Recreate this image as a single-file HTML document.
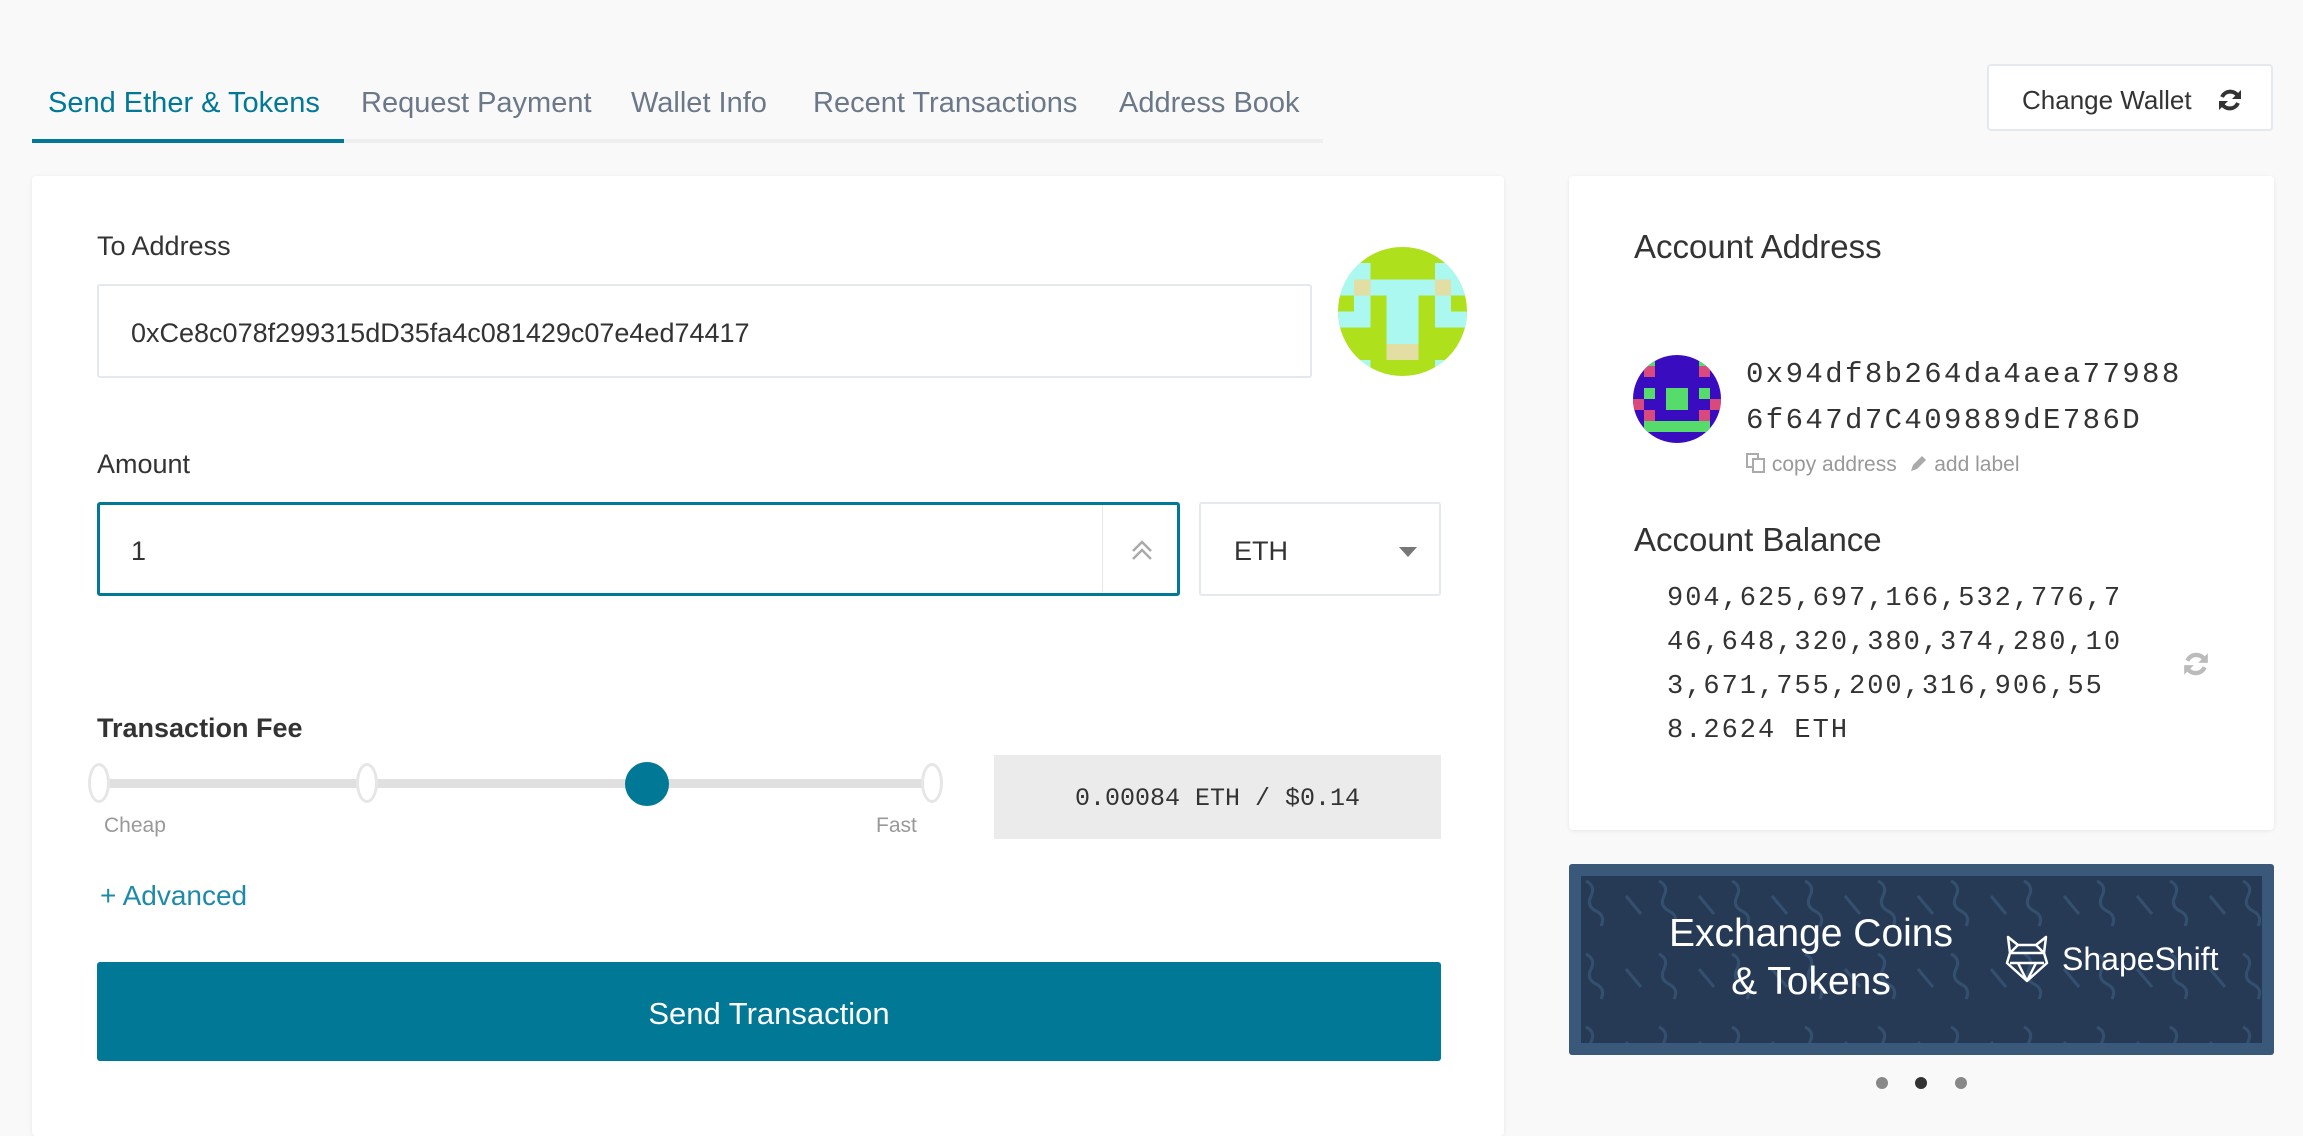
<!DOCTYPE html>
<html><head><meta charset="utf-8"><style>
*{box-sizing:border-box;margin:0;padding:0}
body{width:2303px;height:1113px;background:#f9f9f9;font-family:"Liberation Sans",sans-serif;position:relative;overflow:hidden;color:#333}
.abs{position:absolute}
.tab{position:absolute;top:87px;font-size:29px;color:#6b7888;white-space:nowrap}
.card{position:absolute;background:#fff;border-radius:4px;box-shadow:0 1px 4px rgba(0,0,0,.08)}
.lbl{position:absolute;font-size:27px;color:#333}
.mono{font-family:"Liberation Mono",monospace}
</style></head><body>
<div class="tab" style="left:48px;color:#007896">Send Ether &amp; Tokens</div>
<div class="tab" style="left:361px">Request Payment</div>
<div class="tab" style="left:631px">Wallet Info</div>
<div class="tab" style="left:813px">Recent Transactions</div>
<div class="tab" style="left:1119px">Address Book</div>
<div class="abs" style="left:32px;top:139px;width:1291px;height:4px;background:#efefef"></div>
<div class="abs" style="left:32px;top:139px;width:312px;height:4px;background:#007896"></div>

<div class="abs" style="left:1987px;top:64px;width:286px;height:67px;background:#fff;border:2px solid #e4e9f0;border-radius:4px;font-size:26px;color:#333;padding:19px 0 0 33px">Change Wallet
<svg style="position:absolute;left:228px;top:22px" width="26" height="24" viewBox="0 0 26 24"><path d="M21 8A9 9 0 0 0 5 9" fill="none" stroke="#333" stroke-width="4"/><path d="M24 2v9h-9z" fill="#333"/><path d="M5 16a9 9 0 0 0 16-1" fill="none" stroke="#333" stroke-width="4"/><path d="M2 22v-9h9z" fill="#333"/></svg></div>

<div class="card" style="left:32px;top:176px;width:1472px;height:960px"></div>
<div class="lbl" style="left:97px;top:231px">To Address</div>
<div class="abs" style="left:97px;top:284px;width:1215px;height:94px;border:2px solid #e4e9f0;border-radius:3px;font-size:27px;padding:32px 0 0 32px;color:#333">0xCe8c078f299315dD35fa4c081429c07e4ed74417</div>
<svg class="abs" style="left:1338px;top:247px" width="129" height="129" viewBox="0 0 8 8"><defs><clipPath id="c1"><circle cx="4" cy="4" r="4"/></clipPath></defs><g clip-path="url(#c1)" shape-rendering="crispEdges">
<rect width="8" height="8" fill="#aee11c"/>
<g fill="#aaf8f0"><rect x="0" y="1" width="2" height="1"/><rect x="6" y="1" width="2" height="1"/><rect x="0" y="2" width="8" height="1"/><rect x="1" y="3" width="1" height="1"/><rect x="6" y="3" width="1" height="1"/><rect x="3" y="3" width="2" height="3"/><rect x="0" y="4" width="2" height="1"/><rect x="6" y="4" width="2" height="1"/><rect x="1" y="7" width="1" height="1"/><rect x="6" y="7" width="1" height="1"/></g>
<g fill="#e2dea4"><rect x="1" y="2" width="1" height="1"/><rect x="6" y="2" width="1" height="1"/><rect x="3" y="6" width="2" height="1"/></g></g></svg>

<div class="lbl" style="left:97px;top:449px">Amount</div>
<div class="abs" style="left:97px;top:502px;width:1083px;height:94px;border:3px solid #007896;border-radius:3px;font-size:27px;padding:31px 0 0 31px">1</div>
<div class="abs" style="left:1102px;top:505px;width:1px;height:88px;background:#e4e9f0"></div>
<svg class="abs" style="left:1130px;top:538px" width="24" height="24" viewBox="0 0 24 24"><path d="M3 13l9-9 9 9M3 21l9-9 9 9" fill="none" stroke="#aaa" stroke-width="2.5"/></svg>
<div class="abs" style="left:1199px;top:502px;width:242px;height:94px;border:2px solid #e4e9f0;border-radius:3px;font-size:27px;padding:32px 0 0 33px">ETH</div>
<div class="abs" style="left:1399px;top:547px;width:0;height:0;border-left:9px solid transparent;border-right:9px solid transparent;border-top:10px solid #777"></div>

<div class="lbl" style="left:97px;top:713px;font-weight:bold;font-size:27px">Transaction Fee</div>
<div class="abs" style="left:100px;top:779px;width:830px;height:9px;background:#e0e0e0"></div>
<div class="abs" style="left:88px;top:763px;width:22px;height:40px;border:3px solid #e6e6e6;border-radius:50%;background:#fff"></div>
<div class="abs" style="left:356px;top:763px;width:22px;height:40px;border:3px solid #e6e6e6;border-radius:50%;background:#fff"></div>
<div class="abs" style="left:625px;top:762px;width:44px;height:44px;border-radius:50%;background:#007896"></div>
<div class="abs" style="left:921px;top:763px;width:22px;height:40px;border:3px solid #e6e6e6;border-radius:50%;background:#fff"></div>
<div class="abs" style="left:104px;top:814px;font-size:21px;color:#999">Cheap</div>
<div class="abs" style="left:876px;top:814px;font-size:21px;color:#999">Fast</div>
<div class="abs mono" style="left:994px;top:755px;width:447px;height:84px;background:#ebebeb;font-size:25px;color:#333;text-align:center;line-height:88px">0.00084 ETH / $0.14</div>
<div class="abs" style="left:100px;top:880px;font-size:28px;color:#1e8aaa">+ Advanced</div>
<div class="abs" style="left:97px;top:962px;width:1344px;height:99px;background:#007896;border-radius:3px;color:#fff;font-size:31px;text-align:center;line-height:103px">Send Transaction</div>

<div class="card" style="left:1569px;top:176px;width:705px;height:654px"></div>
<div class="abs" style="left:1634px;top:228px;font-size:33px;color:#333">Account Address</div>
<svg class="abs" style="left:1633px;top:355px" width="88" height="88" viewBox="0 0 8 8"><defs><clipPath id="c2"><circle cx="4" cy="4" r="4"/></clipPath></defs><g clip-path="url(#c2)" shape-rendering="crispEdges">
<rect width="8" height="8" fill="#3a0cc0"/>
<g fill="#55dc6a"><rect x="1" y="0" width="1" height="1"/><rect x="6" y="0" width="1" height="1"/><rect x="1" y="3" width="1" height="1"/><rect x="6" y="3" width="1" height="1"/><rect x="3" y="3" width="2" height="2"/><rect x="1" y="6" width="6" height="1"/></g>
<g fill="#d84a7e"><rect x="1" y="1" width="1" height="1"/><rect x="6" y="1" width="1" height="1"/><rect x="0" y="4" width="1" height="1"/><rect x="7" y="4" width="1" height="1"/><rect x="1" y="5" width="1" height="1"/><rect x="6" y="5" width="1" height="1"/></g></g></svg>
<div class="abs mono" style="left:1746px;top:352px;font-size:29px;letter-spacing:2.4px;line-height:46px;color:#333">0x94df8b264da4aea77988<br>6f647d7C409889dE786D</div>
<div class="abs" style="left:1746px;top:452px;font-size:21px;color:#999">
<svg width="20" height="22" viewBox="0 0 20 22" style="vertical-align:-3px"><rect x="1" y="2" width="11" height="13" fill="none" stroke="#aaa" stroke-width="2"/><rect x="7" y="7" width="11" height="13" fill="#fff" stroke="#aaa" stroke-width="2"/></svg> copy address &nbsp;<svg width="20" height="20" viewBox="0 0 20 20" style="vertical-align:-3px"><path d="M3 17l2-6 9-9 4 4-9 9z" fill="#aaa"/></svg> add label</div>
<div class="abs" style="left:1634px;top:521px;font-size:33px;color:#333">Account Balance</div>
<div class="abs mono" style="left:1667px;top:577px;font-size:27px;letter-spacing:2px;line-height:44px;color:#333">904,625,697,166,532,776,7<br>46,648,320,380,374,280,10<br>3,671,755,200,316,906,55<br>8.2624 ETH</div>
<svg class="abs" style="left:2182px;top:650px" width="28" height="28" viewBox="0 0 26 24"><path d="M21 8A9 9 0 0 0 5 9" fill="none" stroke="#bbb" stroke-width="4"/><path d="M24 2v9h-9z" fill="#bbb"/><path d="M5 16a9 9 0 0 0 16-1" fill="none" stroke="#bbb" stroke-width="4"/><path d="M2 22v-9h9z" fill="#bbb"/></svg>

<div class="abs" style="left:1569px;top:864px;width:705px;height:191px;background:#3a587a;border-radius:3px;padding:12px"><div style="width:100%;height:100%;background:#263a55;position:relative;overflow:hidden">
<svg width="681" height="167" style="position:absolute;left:0;top:0"><defs><pattern id="p" width="73" height="73" patternUnits="userSpaceOnUse"><path d="M5 5q10 5 5 15t5 15q10 5 5 15" fill="none" stroke="#34506f" stroke-width="3"/><path d="M45 20l15 18" stroke="#34506f" stroke-width="3"/></pattern></defs><rect width="681" height="167" fill="url(#p)"/></svg>
<div style="position:absolute;left:60px;top:34px;width:340px;text-align:center;color:#fff;font-size:39px;line-height:48px">Exchange Coins<br>&amp; Tokens</div>
<svg style="position:absolute;left:424px;top:59px" width="44" height="48" viewBox="0 0 44 48"><path d="M3 2l10 8h18l10-8-2 16 3 10-20 18L2 28l3-10z M5 18h34 M13 10l-8 8 M31 10l8 8 M5 28h34 M13 28l9 18 9-18" fill="none" stroke="#fff" stroke-width="2.5" stroke-linejoin="round"/></svg>
<div style="position:absolute;left:481px;top:65px;color:#fff;font-size:32px">ShapeShift</div>
</div></div>
<div class="abs" style="left:1876px;top:1077px;width:12px;height:12px;border-radius:50%;background:#888"></div>
<div class="abs" style="left:1915px;top:1077px;width:12px;height:12px;border-radius:50%;background:#333"></div>
<div class="abs" style="left:1955px;top:1077px;width:12px;height:12px;border-radius:50%;background:#888"></div>
</body></html>
